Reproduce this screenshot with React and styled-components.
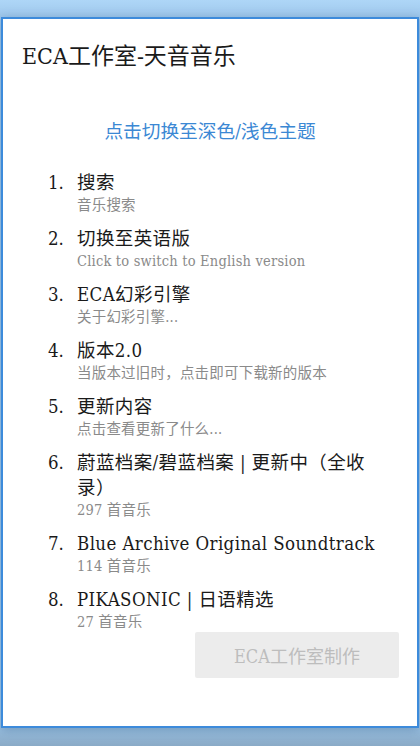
import React from 'react';
import styled, { createGlobalStyle } from 'styled-components';

const GlobalStyle = createGlobalStyle`
  html, body {
    margin: 0;
    padding: 0;
  }
  body {
    background: #a9d2f4;
    font-family: "DejaVu Serif Condensed", "DejaVu Serif", "Noto Sans CJK SC", serif;
    font-stretch: condensed;
  }
`;

const Screen = styled.div`
  height: 746px;
  box-sizing: border-box;
  padding: 17px 1px 18px;
  background: linear-gradient(to bottom, #aed6f7 0px, #9fc8ec 17px, #9fc8ec 720px, #8aaac6 746px);
  display: flex;
`;

const Dialog = styled.div`
  flex: 1;
  display: flex;
  flex-direction: column;
  background: #ffffff;
  border: 2px solid #3d8bdb;
  box-shadow: 0 2px 10px rgba(40, 80, 120, 0.35);
  overflow: hidden;
`;

const Title = styled.h1`
  margin: 0;
  padding: 22px 0 0 19px;
  font-size: 23px;
  line-height: 30px;
  font-weight: normal;
  color: #1a1a1a;
`;

const ThemeLink = styled.div`
  margin-top: 48px;
  text-align: center;
  font-size: 18.7px;
  line-height: 26px;
  color: #3b88d4;
  cursor: pointer;
`;

const ListArea = styled.div`
  flex: 1;
  margin-top: 25px;
  overflow: hidden;
`;

const List = styled.ol`
  list-style: none;
  margin: 0;
  padding: 0 36px 0 45px;
  display: flex;
  flex-direction: column;
  gap: 10px;
`;

const Item = styled.li`
  display: grid;
  grid-template-columns: 29px 1fr;
`;

const Num = styled.span`
  font-size: 18.5px;
  line-height: 25px;
  color: #1a1a1a;
`;

const Body = styled.div`
  display: flex;
  flex-direction: column;
`;

const ItemTitle = styled.span`
  font-size: 18.5px;
  line-height: 25px;
  letter-spacing: 0.4px;
  color: #1a1a1a;
`;

const ItemSub = styled.span`
  font-size: 14.5px;
  line-height: 21px;
  letter-spacing: 0.2px;
  color: #8a8a8a;
`;

const Footer = styled.div`
  display: flex;
  justify-content: flex-end;
  padding: 4px 18px 48px;
`;

const MadeBy = styled.button`
  width: 204px;
  height: 46px;
  border: none;
  border-radius: 2px;
  background: #ececec;
  color: #bdbdbd;
  font-family: inherit;
  font-stretch: inherit;
  font-size: 18px;
`;

const items = [
  { title: '搜索', sub: '音乐搜索' },
  { title: '切换至英语版', sub: 'Click to switch to English version' },
  { title: 'ECA幻彩引擎', sub: '关于幻彩引擎...' },
  { title: '版本2.0', sub: '当版本过旧时，点击即可下载新的版本' },
  { title: '更新内容', sub: '点击查看更新了什么...' },
  { title: '蔚蓝档案/碧蓝档案 | 更新中（全收录）', sub: '297 首音乐' },
  { title: 'Blue Archive Original Soundtrack', sub: '114 首音乐' },
  { title: 'PIKASONIC | 日语精选', sub: '27 首音乐' },
];

export default function App() {
  return (
    <Screen>
      <GlobalStyle />
      <Dialog>
        <Title>ECA工作室-天音音乐</Title>
        <ThemeLink>点击切换至深色/浅色主题</ThemeLink>
        <ListArea>
          <List>
            {items.map((it, i) => (
              <Item key={i}>
                <Num>{i + 1}.</Num>
                <Body>
                  <ItemTitle>{it.title}</ItemTitle>
                  <ItemSub>{it.sub}</ItemSub>
                </Body>
              </Item>
            ))}
          </List>
        </ListArea>
        <Footer>
          <MadeBy disabled>ECA工作室制作</MadeBy>
        </Footer>
      </Dialog>
    </Screen>
  );
}
